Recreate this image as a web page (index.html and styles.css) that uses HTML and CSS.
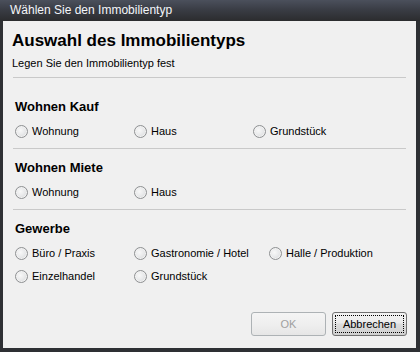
FILE: index.html
```html
<!DOCTYPE html>
<html lang="de">
  <head>
    <title>Immobilientyp</title>
    <link rel="stylesheet" href="styles.css">
  </head>
  <body>
    <div class="dialog">
      <div class="titlebar">Wählen Sie den Immobilientyp</div>

      <div class="client">
        <div class="header">
          <h1>Auswahl des Immobilientyps</h1>
          <p>Legen Sie den Immobilientyp fest</p>
        </div>

        <hr />

        <div class="group group-first">
          <h2>Wohnen Kauf</h2>
          <div class="options">
            <label><input type="radio" name="typ" />Wohnung</label>
            <label><input type="radio" name="typ" />Haus</label>
            <label><input type="radio" name="typ" />Grundstück</label>
          </div>
        </div>

        <hr />

        <div class="group">
          <h2>Wohnen Miete</h2>
          <div class="options">
            <label><input type="radio" name="typ" />Wohnung</label>
            <label><input type="radio" name="typ" />Haus</label>
          </div>
        </div>

        <hr />

        <div class="group">
          <h2>Gewerbe</h2>
          <div class="options options-wide">
            <label><input type="radio" name="typ" />Büro / Praxis</label>
            <label><input type="radio" name="typ" />Gastronomie / Hotel</label>
            <label><input type="radio" name="typ" />Halle / Produktion</label>
            <label><input type="radio" name="typ" />Einzelhandel</label>
            <label><input type="radio" name="typ" />Grundstück</label>
          </div>
        </div>

        <div class="buttons">
          <button type="button" disabled>OK</button>
          <button type="button" class="focused"><span>Abbrechen</span></button>
        </div>
      </div>
    </div>
  </body>
</html>
```

FILE: styles.css
```css
body {
  margin: 0;
  font-family: "Liberation Sans", Arial, sans-serif;
  color: #000;
}

.dialog {
  display: flex;
  flex-direction: column;
  width: 420px;
  height: 352px;
  background-color: #2e3034;
}

.titlebar {
  height: 21px;
  padding-left: 10px;
  line-height: 20px;
  font-size: 12px;
  color: #f4f6fa;
  background: linear-gradient(#4b505c, #3a3d45 45%, #2b2c2e);
}

.client {
  display: flex;
  flex-direction: column;
  flex: 1;
  margin: 0 4px 4px 3px;
  background-color: #f0f0f0;
}

.header {
  padding: 10px 9px 0 9px;
}

h1 {
  margin: 0;
  font-size: 17px;
  line-height: 20px;
  font-weight: bold;
}

p {
  margin: 5px 0 0 0;
  font-size: 11px;
  line-height: 14px;
}

hr {
  margin: 7px 10px 0 10px;
  border: 0;
  border-top: 1px solid #c9c9c9;
  height: 0;
}

.group + hr {
  margin-top: 0;
}

.group {
  padding: 11px 0 10px 12px;
}

.group-first {
  padding-top: 21px;
}

h2 {
  margin: 0;
  font-size: 13px;
  line-height: 16px;
  font-weight: bold;
}

.options {
  display: grid;
  grid-template-columns: 119px 119px auto;
  row-gap: 9px;
  margin-top: 9px;
}

.options-wide {
  grid-template-columns: 119px 135px auto;
}

label {
  display: flex;
  align-items: center;
  gap: 4px;
  font-size: 11px;
  line-height: 14px;
}

input[type="radio"] {
  appearance: none;
  margin: 0;
  width: 13px;
  height: 13px;
  border: 1px solid #8e9092;
  border-radius: 50%;
  background: radial-gradient(circle at 40% 40%, #f8f8f8 0, #e9eaeb 45%, #cfd0d2 100%);
  box-shadow: inset 0 0 0 1px #f2f2f2;
}

.buttons {
  display: flex;
  justify-content: flex-end;
  gap: 6px;
  margin-top: auto;
  padding: 0 9px 12px 0;
}

button {
  width: 75px;
  height: 24px;
  padding: 2px;
  font-family: inherit;
  font-size: 11px;
  border: 1px solid #707070;
  border-radius: 3px;
  background: linear-gradient(#f2f2f2, #ebebeb 45%, #dddddd 50%, #cfcfcf);
  color: #000;
}

button:disabled {
  border-color: #adb2b5;
  background: linear-gradient(#f4f4f4, #efefef 50%, #e6e6e6);
  color: #a0a0a0;
}

.focused span {
  display: block;
  height: 100%;
  line-height: 17px;
  border: 1px dotted #000;
  box-sizing: border-box;
}
```
